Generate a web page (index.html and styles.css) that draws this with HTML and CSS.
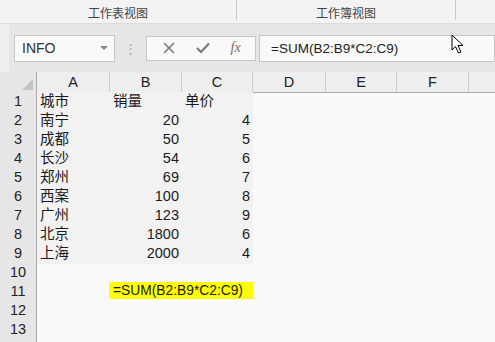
FILE: index.html
```html
<!DOCTYPE html>
<html lang="zh">
<head>
    <meta charset="UTF-8">
    <title>SUM</title>
    <link rel="stylesheet" href="styles.css">
</head>
<body>
    <div id="screen">
        <div class="tabs">
            <div class="tab tab-sheet">工作表视图</div>
            <div class="tab tab-book">工作簿视图</div>
            <div class="tab tab-rest"></div>
        </div>

        <div class="formula-bar">
            <div class="name-box">
                <span>INFO</span>
                <span class="caret"></span>
            </div>
            <div class="grip">⋮</div>
            <div class="fx-buttons">
                <svg width="12" height="12" viewBox="0 0 12 12"><path d="M1 1L11 11M11 1L1 11" stroke="#7a7a7a" stroke-width="1.6" fill="none"/></svg>
                <svg width="14" height="12" viewBox="0 0 14 12"><path d="M1 6L5 10L13 1.5" stroke="#7a7a7a" stroke-width="2.2" fill="none"/></svg>
                <span class="fx">fx</span>
            </div>
            <div class="formula-input">=SUM(B2:B9*C2:C9)</div>
        </div>

        <div class="sheet">
            <div class="corner"><span class="tri"></span></div>
            <div class="col-head">A</div>
            <div class="col-head">B</div>
            <div class="col-head">C</div>
            <div class="col-head">D</div>
            <div class="col-head">E</div>
            <div class="col-head">F</div>
            <div class="col-head last"></div>
        </div>
        <div id="rows"></div>

        <svg class="pointer" width="14" height="20" viewBox="0 0 14 20">
            <path d="M1 1V16L4.5 12.5L7.5 19L10 18L7 11.5H12Z" fill="#fff" stroke="#000" stroke-width="1" stroke-linejoin="round"/>
        </svg>
    </div>

    <script>
        const data = [
            ['城市', '销量', '单价'],
            ['南宁', 20, 4],
            ['成都', 50, 5],
            ['长沙', 54, 6],
            ['郑州', 69, 7],
            ['西案', 100, 8],
            ['广州', 123, 9],
            ['北京', 1800, 6],
            ['上海', 2000, 4]
        ];
        const rows = document.getElementById('rows');

        for (let r = 1; r <= 14; r++) {
            const row = document.createElement('div');
            row.className = 'sheet';
            // 14행은 화면 아래에 살짝만 보임
            let html = `<div class="row-head">${r < 14 ? r : ''}</div>`;
            const item = data[r - 1];
            if (item) {
                const head = r === 1 ? ' title-row' : '';
                const num = r === 1 ? 'text' : 'num';
                html += `<div class="cell data${head}">${item[0]}</div>`;
                html += `<div class="cell data ${num}${head}">${item[1]}</div>`;
                html += `<div class="cell data ${num}${head}">${item[2]}</div>`;
            } else if (r === 11) {
                html += '<div class="cell"></div><div class="cell marked">=SUM(B2:B9*C2:C9)</div>';
            } else {
                html += '<div class="cell"></div><div class="cell"></div><div class="cell"></div>';
            }
            html += '<div class="cell"></div><div class="cell"></div><div class="cell"></div><div class="cell"></div>';
            row.innerHTML = html;
            rows.appendChild(row);
        }
    </script>
</body>
</html>
```
FILE: styles.css
```css
body {
    margin: 0;
    font-family: 'Liberation Sans', 'Noto Sans CJK SC', sans-serif;
    background: #f9f9f9;
    color: #1a1a1a;
}
#screen {
    width: 495px;
    height: 342px;
    overflow: hidden;
    position: relative;
    background: #f9f9f9;
}
.tabs {
    display: flex;
    height: 23px;
    background: #f3f3f3;
    border-bottom: 1px solid #dcdcdc;
}
.tab {
    display: flex;
    align-items: center;
    justify-content: center;
    font-family: 'Noto Sans CJK SC', sans-serif;
    font-size: 12px;
    color: #444;
    border-right: 1px solid #c8c8c8;
    margin-bottom: 3px;
    padding-top: 4px;
}
.tab-sheet { width: 236px; }
.tab-book { width: 218px; }
.tab-rest { flex: 1; border-right: none; }
.formula-bar {
    display: flex;
    align-items: center;
    height: 48px;
    padding-left: 14px;
    background: #e6e6e6;
    box-shadow: inset 9px 0 0 #efefef;
}
.name-box, .fx-buttons, .formula-input {
    height: 25px;
    background: #f9f9f9;
    border: 1px solid #c6c6c6;
    display: flex;
    align-items: center;
}
.name-box {
    width: 86px;
    padding: 0 6px 0 7px;
    justify-content: space-between;
    font-size: 14px;
    color: #333;
}
.caret {
    width: 0;
    height: 0;
    border-left: 4px solid transparent;
    border-right: 4px solid transparent;
    border-top: 4px solid #8a8a8a;
}
.grip {
    width: 31px;
    text-align: center;
    color: #a6a6a6;
    font-size: 13px;
}
.fx-buttons {
    width: 110px;
    justify-content: space-around;
    padding: 0 4px 0 6px;
    box-sizing: border-box;
}
.fx {
    font-family: 'Liberation Serif', serif;
    font-style: italic;
    font-size: 14px;
    color: #6e6e6e;
}
.formula-input {
    flex: 1;
    margin-left: 3px;
    padding-left: 11px;
    font-size: 13.5px;
    color: #222;
}
.sheet {
    display: grid;
    grid-template-columns: 37px 73px 72px 71px 73px 71px 72px 1fr;
    height: 19px;
}
.corner {
    background: #e6e6e6;
    border-right: 1px solid #ababab;
    border-bottom: 1px solid #ababab;
    display: flex;
    align-items: flex-end;
    justify-content: flex-end;
    padding: 0 3px 2px 0;
}
.tri {
    width: 0;
    height: 0;
    border-left: 11px solid transparent;
    border-bottom: 11px solid #c2c2c2;
}
.sheet:first-of-type {
    margin-top: 1px;
}
.col-head {
    background: #eeeeee;
    border-bottom: 1px solid #ababab;
    border-right: 1px solid #cbcbcb;
    text-align: center;
    font-size: 14.5px;
    line-height: 20px;
    color: #222;
}
.col-head.last { border-right: none; }
.row-head {
    background: #e6e6e6;
    border-right: 1px solid #ababab;
    border-bottom: 1px solid #f4f4f4;
    text-align: center;
    font-size: 14.5px;
    line-height: 19px;
    color: #222;
}
.cell {
    font-size: 14.5px;
    line-height: 19px;
    padding: 0 3px;
    white-space: nowrap;
    overflow: hidden;
}
.data {
    background: #f2f2f2;
    font-family: 'Liberation Sans', 'Noto Sans CJK SC', sans-serif;
}
.num { text-align: right; }
.title-row {
    border-bottom: 1px solid #000;
    line-height: 18px;
}
.marked {
    grid-column: span 2;
    background: #ffff00;
    height: 17px;
    line-height: 17px;
    margin-left: -1px;
    padding-left: 4px;
    font-size: 13.8px;
}
.pointer {
    position: absolute;
    left: 451px;
    top: 34px;
}
```
